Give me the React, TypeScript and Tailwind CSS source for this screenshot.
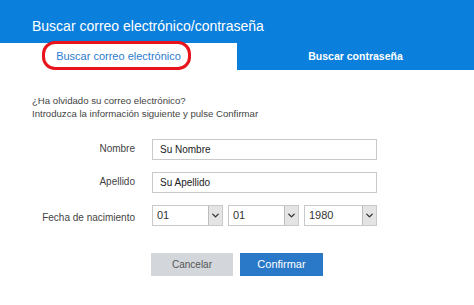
import { ChevronDown } from 'lucide-react';

const font = { fontFamily: '"Liberation Sans", Arial, sans-serif' };

const DateSelect = ({ value, width }: { value: string; width: string }) => (
  <div className={`flex h-[21px] ${width} border border-[#c9c9c9] bg-white`}>
    <span className="flex-1 pl-[4px] text-[11px] leading-[19px] text-[#333]">{value}</span>
    <span className="flex w-[14px] items-center justify-center border-l border-[#bdbdbd] bg-[#e4e4e4]">
      <ChevronDown size={11} strokeWidth={3} className="text-[#333]" />
    </span>
  </div>
);

export default function App() {
  return (
    <div className="h-[305px] w-[474px] overflow-hidden bg-white" style={font}>
      <div className="flex h-[43px] items-center bg-[#0b7fdc] pl-[32px] pt-[10px]">
        <span className="text-[14px] text-white">Buscar correo electrónico/contraseña</span>
      </div>
      <div className="flex h-[27px]">
        <div className="relative flex w-[237px] items-center justify-center bg-white">
          <span className="text-[11px] text-[#2c7bd0]">Buscar correo electrónico</span>
          <div className="absolute left-[42px] top-[-2px] h-[29px] w-[149px] rounded-[13px] border-[3px] border-[#e8131b]" />
        </div>
        <div className="flex flex-1 items-center justify-center bg-[#0b7fdc]">
          <span className="text-[10.5px] font-bold text-white">Buscar contraseña</span>
        </div>
      </div>
      <div className="pl-[32px] pt-[24px] text-[9.6px] leading-[13px] text-[#444]">
        <p>¿Ha olvidado su correo electrónico?</p>
        <p>Introduzca la información siguiente y pulse Confirmar</p>
      </div>
      <div className="mt-[19px] grid grid-cols-[135px_225px] gap-x-[17px] gap-y-[12px] text-[10px] text-[#444]">
        <span className="pt-[2px] text-right">Nombre</span>
        <div className="h-[21px] border border-[#c9c9c9] pl-[7px] text-[10px] leading-[19px] text-[#222]">Su Nombre</div>
        <span className="pt-[2px] text-right">Apellido</span>
        <div className="h-[21px] border border-[#c9c9c9] pl-[7px] text-[10px] leading-[19px] text-[#222]">Su Apellido</div>
        <span className="pt-[5px] text-right">Fecha de nacimiento</span>
        <div className="flex gap-[5px]">
          <DateSelect value="01" width="w-[71px]" />
          <DateSelect value="01" width="w-[71px]" />
          <DateSelect value="1980" width="w-[73px]" />
        </div>
      </div>
      <div className="mt-[27px] flex gap-[7px] pl-[151px]">
        <button className="h-[23px] w-[82px] bg-[#d3d6da] text-[10px] text-[#555]">Cancelar</button>
        <button className="h-[23px] w-[83px] bg-[#2a78c8] text-[11px] text-white">Confirmar</button>
      </div>
    </div>
  );
}
